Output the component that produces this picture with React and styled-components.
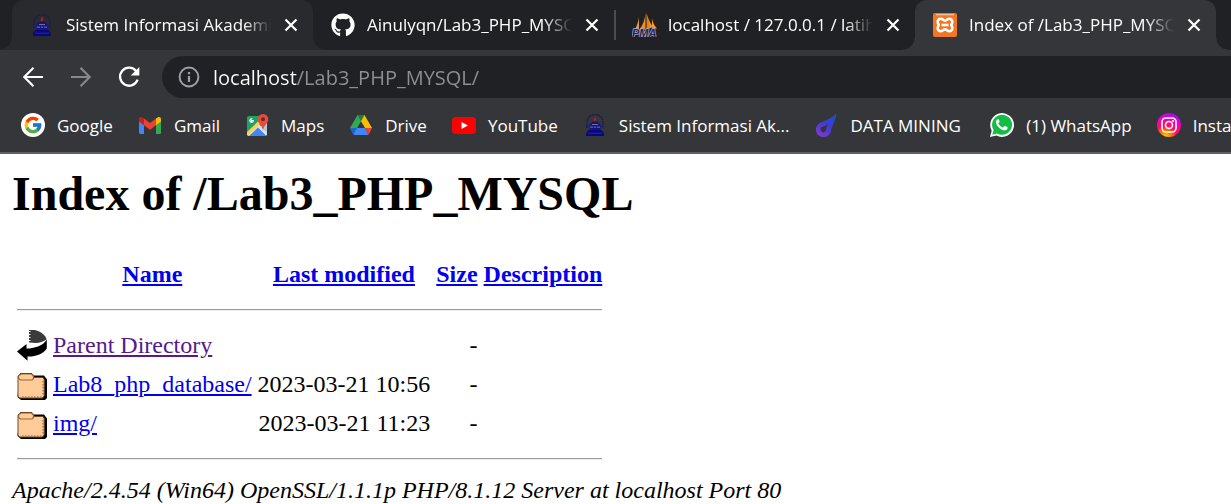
import React from "react";
import styled, { createGlobalStyle, css } from "styled-components";
import { FaGithub } from "react-icons/fa";
import { FcGoogle } from "react-icons/fc";

const GlobalStyle = createGlobalStyle`
  *, *::before, *::after { box-sizing: border-box; }
  body { margin: 0; background: #fff; }
`;

const uiFont = css`
  font-family: "Open Sans", "Noto Sans", sans-serif;
  font-weight: 400;
`;

const Chrome = styled.header`
  ${uiFont}
  font-size: 17px;
  background: #35363a;
  color: #fff;
  border-bottom: 2px solid #5f6063;
  overflow: hidden;
`;

const TabStrip = styled.div`
  display: flex;
  height: 50px;
  padding: 0 12px;
  background: #202124;
`;

const Tab = styled.div`
  position: relative;
  flex: 0 1 301px;
  min-width: 0;
  display: flex;
  align-items: center;
  gap: 8px;
  padding: 0 10px 0 18px;
  border-radius: 12px 12px 0 0;
  background: ${(p) => p.$bg || "transparent"};

  ${(p) =>
    p.$bg &&
    css`
      &::before,
      &::after {
        content: "";
        position: absolute;
        bottom: 0;
        width: 12px;
        height: 12px;
      }
      &::before {
        right: 100%;
        background: radial-gradient(circle at 0 0, transparent 11px, ${p.$bg} 12px);
      }
      &::after {
        left: 100%;
        background: radial-gradient(circle at 100% 0, transparent 11px, ${p.$bg} 12px);
      }
    `}

  ${(p) =>
    p.$divider &&
    css`
      &::after {
        content: "";
        position: absolute;
        right: -2px;
        top: 10px;
        width: 2px;
        height: 30px;
        background: #4a4c50;
      }
    `}
`;

const TabButton = styled.button`
  flex: 1;
  min-width: 0;
  display: flex;
  align-items: center;
  gap: 12px;
  padding: 0;
  border: 0;
  background: none;
  color: inherit;
  font: inherit;
  text-align: left;
`;

const TabTitle = styled.span`
  flex: 1;
  min-width: 0;
  overflow: hidden;
  white-space: nowrap;
  line-height: 24px;
  mask-image: linear-gradient(to right, #000 calc(100% - 28px), transparent);
`;

const IconButton = styled.button`
  flex: none;
  display: grid;
  place-items: center;
  width: 24px;
  height: 24px;
  padding: 0;
  border: 0;
  background: none;
  color: ${(p) => (p.$dim ? "#87888b" : "#fff")};
`;

const IconBox = styled.span`
  flex: none;
  display: grid;
  place-items: center;
  width: 24px;
  height: 24px;
  svg { display: block; }
`;

const Toolbar = styled.div`
  display: flex;
  align-items: center;
  gap: 24px;
  height: 54px;
  padding-left: 21px;
`;

const AddressBar = styled.label`
  flex: 1;
  display: flex;
  align-items: center;
  gap: 12px;
  height: 42px;
  margin-left: -3px;
  padding-left: 15px;
  border-radius: 21px 0 0 21px;
  background: #202124;
`;

const AddressInput = styled.input`
  ${uiFont}
  flex: 1;
  min-width: 0;
  height: 30px;
  padding: 0;
  border: 0;
  outline: 0;
  font-size: 20px;
  color: #fff;
  background: linear-gradient(to right, #fff 84px, #8d9095 84px);
  background-clip: text;
  -webkit-text-fill-color: transparent;
`;

const Bookmarks = styled.nav`
  display: flex;
  gap: 25px;
  height: 48px;
  padding: 0 0 6px 21px;
`;

const Bookmark = styled.a`
  flex: none;
  display: flex;
  align-items: center;
  gap: 12px;
  color: #fff;
  text-decoration: none;
  white-space: pre;
`;

const Page = styled.main`
  padding: 12px 12px 0;
  font-family: "Liberation Serif", "Times New Roman", serif;
  font-size: 24px;
  line-height: 27px;
  color: #000;
`;

const Heading = styled.h1`
  margin: 0 0 31px;
  font-size: 48px;
  line-height: 56px;
  font-weight: 700;
`;

const Listing = styled.table`
  border-spacing: 4px;
  border-collapse: separate;
  th, td { padding: 1px; white-space: nowrap; }
  th { text-align: center; height: 35px; }
`;

const RightCell = styled.td`
  text-align: right;
`;

const RuleCell = styled.td`
  hr {
    height: 2px;
    margin: 12px 0;
    border: 0;
    border-top: 1px solid #9a9a9a;
    border-bottom: 1px solid #eee;
  }
`;

const FileLink = styled.a`
  color: ${(p) => (p.$visited ? "#551a8b" : "#0000ee")};
`;

const FileIcon = styled.svg`
  display: block;
  width: 30px;
  height: 33px;
`;

const Signature = styled.address`
  font-style: italic;
`;

const Disc = styled.span`
  display: grid;
  place-items: center;
  width: 24px;
  height: 24px;
  border-radius: 50%;
  background: #fff;
`;

const Close = () => (
  <svg width="14" height="14" viewBox="0 0 14 14" stroke="currentColor" strokeWidth="2.2">
    <path d="M1.500 1.500 12.500 12.500M12.500 1.500 1.500 12.500" />
  </svg>
);

const Back = () => (
  <svg width="22" height="22" viewBox="0 0 22 22" fill="none" stroke="currentColor" strokeWidth="2.2">
    <path d="M21 11H3M11.5 1.8 2.3 11l9.2 9.2" />
  </svg>
);

const Forward = () => (
  <svg width="22" height="22" viewBox="0 0 22 22" fill="none" stroke="currentColor" strokeWidth="2.2">
    <path d="M1 11h18M10.5 1.8l9.2 9.2-9.2 9.2" />
  </svg>
);

const Reload = () => (
  <svg width="22" height="22" viewBox="0 0 22 22" fill="none">
    <path d="M18.200 5.200A9 9 0 1 0 19.600 13.600" stroke="currentColor" strokeWidth="2.3" />
    <path d="M21.300 1v8.600h-8.600z" fill="currentColor" />
  </svg>
);

const Info = () => (
  <svg width="22" height="22" viewBox="0 0 22 22" fill="none" stroke="#9aa0a6" strokeWidth="2">
    <circle cx="11" cy="11" r="9.4" />
    <path d="M11 10v6M11 6v2.200" strokeWidth="2.2" />
  </svg>
);

const Campus = () => (
  <svg width="20" height="22" viewBox="0 0 20 22">
    <path d="M2 14V8.500a8 8 0 0 1 16 0V14" fill="none" stroke="#1b1b52" strokeWidth="1.600" strokeDasharray="1.600 .8" />
    <path d="M10 6.500 4.500 10v6h11v-6z" fill="#14147a" />
    <path d="M2 12.500h16" stroke="#1d1d80" strokeWidth="2" />
    <path d="M7 10.500h6M5 13.200h3M9 13.200h2M12 13.200h3" stroke="#6d6da6" strokeWidth="1" />
    <path d="M10.500 2.500c-2.400 2-2 4-.9 5.500 1.900-1 1.900-3.500.9-5.500z" fill="#b31d22" />
    <path d="M1 19.500 3.500 16h13l2.500 3.500V22H1z" fill="#07077e" />
    <path d="M3 19.200h14" stroke="#2c2c86" />
  </svg>
);

const PhpMyAdmin = () => (
  <svg width="26" height="24" viewBox="0 0 26 24">
    <defs>
      <linearGradient id="sail" x1="0" x2="1">
        <stop offset="0" stopColor="#d5791b" />
        <stop offset="1" stopColor="#fba62b" />
      </linearGradient>
    </defs>
    <path d="M7 4v13H2.500C4.500 14 6.500 9 7 4z" fill="#e49a55" />
    <path d="M13.500 0v16.500H7.500C11 12 13 6 13.500 0z" fill="#f08a1d" />
    <path d="M14.500 0C16 6 19 11 21 14l-6.500 2.500z" fill="url(#sail)" />
    <path d="M20 5c.5 4 2 7 5 10.500h-5z" fill="#f79b24" />
    <text x="0" y="23.500" fontFamily="Liberation Sans, sans-serif" fontSize="11" fontStyle="italic" fontWeight="700" fill="#26264f" stroke="#a8a8cc" strokeWidth="1.400" paintOrder="stroke">PMA</text>
  </svg>
);

const Xampp = () => (
  <svg width="24" height="24" viewBox="0 0 24 24">
    <rect width="24" height="24" rx="2" fill="#f37623" />
    <path d="M3 1.700h18" stroke="#f9c09a" strokeWidth="1.200" />
    <path d="M7.700 5.800c2.300 0 2.300 1.800 4.300 1.800s2-1.800 4.300-1.800a3 3 0 0 1 3 3.200c0 1.600-1 2.300-1 3s1 1.500 1 3a3 3 0 0 1-3 3.200c-2.300 0-2.300-1.800-4.300-1.800s-2 1.800-4.300 1.800a3 3 0 0 1-3-3.200c0-1.500 1-2.300 1-3s-1-1.400-1-3a3 3 0 0 1 3-3.200z" fill="none" stroke="#fff" strokeWidth="2.600" />
    <path d="M8.500 12h7" stroke="#fff" strokeWidth="2.600" />
  </svg>
);

const Gmail = () => (
  <svg width="22" height="17" viewBox="0 0 22 17">
    <path d="M0 4 5 7.500V17H1.500A1.500 1.500 0 0 1 0 15.500z" fill="#4285f4" />
    <path d="M17 7.500 22 4v11.500a1.500 1.500 0 0 1-1.500 1.500H17z" fill="#34a853" />
    <path d="M17 1.500 19 .3C20.500-.5 22 .5 22 2.200V4.500L17 8.200z" fill="#fbbc04" />
    <path d="M5 8.200V1.500L11 6l6-4.500v6.700l-6 4.500z" fill="#ea4335" />
    <path d="M0 4.500V2.200C0 .5 1.500-.5 3 .3l2 1.200v6.700z" fill="#c5221f" />
  </svg>
);

const Maps = () => (
  <svg width="23" height="23" viewBox="0 0 23 23">
    <rect x="1" y="2" width="20" height="20" rx="2" fill="#1ea362" />
    <path d="M1 20 12 9.500 21 18v2a2 2 0 0 1-2 2H3a2 2 0 0 1-2-2z" fill="#dce4ec" />
    <path d="M3 22 12 13.500 20.500 22z" fill="#4285f4" />
    <path d="m1 18 11-10.500 2.200 2.200L2 21.500 1 20z" fill="#ffd04b" />
    <path d="M21 8.500v10l-6.500-6z" fill="#bac8d5" />
    <path d="M7.800 6.500H5.500v1.300h1.200A1.700 1.700 0 1 1 6.300 5" fill="none" stroke="#fff" strokeWidth="1.200" />
    <path d="M17 0a5.300 5.300 0 0 0-5.300 5.300c0 4 4.300 5.500 5.300 11.200 1-5.700 5.300-7.200 5.300-11.200A5.300 5.300 0 0 0 17 0z" fill="#e84c3d" />
    <circle cx="17" cy="5.300" r="2" fill="#7d231c" />
  </svg>
);

const Drive = () => (
  <svg width="22" height="20" viewBox="0 0 22 20">
    <path d="M7.500 0h7L11 6.300 3.700 19 0 13z" fill="#34a853" />
    <path d="M7.500 0h7L11 6.300z" fill="#188038" />
    <path d="M14.500 0 22 13h-7L11 6.300z" fill="#fbbc04" />
    <path d="M0 13h7l-3.500 6.500C2.500 19 2 16.500 0 13z" fill="#1967d2" />
    <path d="M7 13h8l3.500 6.500c-.5.400-1 .500-1.500.500H5c-.500 0-1-.1-1.500-.500z" fill="#4285f4" />
    <path d="M15 13h7l-2.500 5c-.300.700-.500 1.200-1 1.500z" fill="#ea4335" />
  </svg>
);

const YouTube = () => (
  <svg width="24" height="17" viewBox="0 0 24 17">
    <rect width="24" height="17" rx="4" fill="#f00" />
    <path d="m9.500 5 6.500 3.500L9.500 12z" fill="#fff" />
  </svg>
);

const Drop = () => (
  <svg width="22" height="24" viewBox="0 0 22 24">
    <defs>
      <linearGradient id="drop" x1="0.900" y1="0" x2="0.200" y2="1">
        <stop offset="0" stopColor="#1457c8" />
        <stop offset=".45" stopColor="#3e3bd0" />
        <stop offset="1" stopColor="#7c3bd0" />
      </linearGradient>
    </defs>
    <path fillRule="evenodd" fill="url(#drop)" d="M21.500.5C16 6 9 7.500 4 10.500a7.600 7.600 0 1 0 12 7.500C17.500 11 21 7 21.500.5zM8.200 19.400a3 3 0 0 1-1.500-5.400c2-.3 4.500-1.500 6.300-3.200-1.300 2.500-1.400 4.200-2 6.200a3 3 0 0 1-2.800 2.400z" />
  </svg>
);

const WhatsApp = () => (
  <svg width="24" height="24" viewBox="0 0 24 24">
    <path d="M0 24l1.700-6.200A11.900 11.900 0 1 1 6.300 22.400z" fill="#fff" />
    <path d="M2.300 21.700l1.300-4.600A10 10 0 1 1 7 20.400z" fill="#13bd45" />
    <path d="M8.900 6.600c-.3-.7-1.700-.6-2.300.4-2.100 3.200 1.600 7.200 4.200 9 2.700 1.800 5.700 1.900 6.600-.2.400-1 .3-1.500-.1-1.700l-2.300-1.100c-1-.4-1.300 1.700-2.200 1.400-1.800-.6-3.600-2.200-4.400-4-.3-.8 1.400-1.300 1.200-2z" fill="#fff" />
  </svg>
);

const Instagram = () => (
  <svg width="24" height="24" viewBox="0 0 24 24">
    <defs>
      <radialGradient id="insta" cx="0.350" cy="1" r="1.050">
        <stop offset="0" stopColor="#ffd400" />
        <stop offset=".25" stopColor="#ff7a00" />
        <stop offset=".45" stopColor="#ff0f60" />
        <stop offset=".75" stopColor="#ee00c0" />
        <stop offset="1" stopColor="#8a12ff" />
      </radialGradient>
    </defs>
    <circle cx="12" cy="12" r="12" fill="url(#insta)" />
    <g fill="none" stroke="#fff" strokeWidth="1.600">
      <rect x="5" y="5" width="14" height="14" rx="4" />
      <circle cx="12" cy="12" r="3.500" />
    </g>
    <circle cx="16" cy="8" r="1" fill="#fff" />
  </svg>
);

const Google = () => (
  <Disc>
    <FcGoogle size={20} />
  </Disc>
);

const BackArrow = () => (
  <FileIcon viewBox="0 0 30 33" aria-hidden="true">
    <path d="M12 1h6c6 1.500 10.500 5 11.500 9.500-3.500 2.500-7 3.300-10.500 3.500l-7-.5z" fill="#3a3a3a" />
    <path d="M12 2.500h1.500M12 5.500h1.500M12 8.500h1.500M12 11.500h1.500" stroke="#fff" strokeWidth="1.200" />
    <path d="M29.800 10.500v9c-3.500 5.500-10.500 8.200-19.300 8v4.200L0 22.500 9.500 15v4.500C17 19.500 26 17 29.800 10.500z" fill="#000" />
  </FileIcon>
);

const Folder = () => (
  <FileIcon viewBox="0 0 30 33" aria-hidden="true">
    <path d="M3 5.500 4 5h10.500l2.500 2.500h10l3 4V30l-2 2H4l-3.500-3z" fill="#000" />
    <path d="M1 11.500V8l2.500-2H14l2.500 2v1.500H26l1.200 2v16L25.500 30H3l-2-1.500z" fill="#ffcc99" stroke="#6a4a2e" strokeWidth="1" />
    <path d="M1.500 10.500 3.500 12H15l1.500-1.500V8L14.500 6H4L1.500 8z" fill="#ffcc99" stroke="#996633" strokeWidth="1.200" />
    <path d="M26 13v15M5 29h20" stroke="#b37a45" strokeWidth="1.500" strokeDasharray="1.500 1.500" />
  </FileIcon>
);

const GitHub = () => <FaGithub size={24} />;

const tabs = [
  { title: "Sistem Informasi Akademik", icon: Campus, bg: "#292a2d" },
  { title: "Ainulyqn/Lab3_PHP_MYSQL", icon: GitHub, divider: true },
  { title: "localhost / 127.0.0.1 / latihan1", icon: PhpMyAdmin },
  { title: "Index of /Lab3_PHP_MYSQL", icon: Xampp, bg: "#35363a", active: true },
];

const bookmarks = [
  ["Google", Google],
  ["Gmail", Gmail],
  ["Maps", Maps],
  ["Drive", Drive],
  ["YouTube", YouTube],
  ["Sistem Informasi Ak...", Campus],
  ["DATA MINING ", Drop],
  ["(1) WhatsApp", WhatsApp],
  ["Instagram", Instagram],
];

const files = [
  { name: "Parent Directory", date: "", icon: BackArrow, visited: true },
  { name: "Lab8_php_database/", date: "2023-03-21 10:56", icon: Folder },
  { name: "img/", date: "2023-03-21 11:23", icon: Folder },
];

const Rule = () => (
  <tr>
    <RuleCell colSpan={5}>
      <hr />
    </RuleCell>
  </tr>
);

export default function App() {
  return (
    <>
      <GlobalStyle />
      <Chrome>
        <TabStrip role="tablist">
          {tabs.map(({ title, icon: Icon, bg, divider, active }) => (
            <Tab key={title} $bg={bg} $divider={divider}>
              <TabButton role="tab" aria-selected={!!active}>
                <IconBox><Icon /></IconBox>
                <TabTitle>{title}</TabTitle>
              </TabButton>
              <IconButton aria-label="Close tab"><Close /></IconButton>
            </Tab>
          ))}
        </TabStrip>
        <Toolbar>
          <IconButton aria-label="Back"><Back /></IconButton>
          <IconButton aria-label="Forward" $dim><Forward /></IconButton>
          <IconButton aria-label="Reload"><Reload /></IconButton>
          <AddressBar>
            <IconBox><Info /></IconBox>
            <AddressInput aria-label="Address" defaultValue="localhost/Lab3_PHP_MYSQL/" />
          </AddressBar>
        </Toolbar>
        <Bookmarks aria-label="Bookmarks">
          {bookmarks.map(([label, Icon]) => (
            <Bookmark key={label} href="#">
              <IconBox><Icon /></IconBox>
              <span>{label}</span>
            </Bookmark>
          ))}
        </Bookmarks>
      </Chrome>
      <Page>
        <Heading>Index of /Lab3_PHP_MYSQL</Heading>
        <Listing>
          <tbody>
            <tr>
              <th aria-label="Type" />
              <th scope="col"><FileLink href="#">Name</FileLink></th>
              <th scope="col"><FileLink href="#">Last modified</FileLink></th>
              <th scope="col"><FileLink href="#">Size</FileLink></th>
              <th scope="col"><FileLink href="#">Description</FileLink></th>
            </tr>
            <Rule />
            {files.map(({ name, date, icon: Icon, visited }) => (
              <tr key={name}>
                <td><Icon /></td>
                <td><FileLink href="#" $visited={visited}>{name}</FileLink></td>
                <RightCell>{date}</RightCell>
                <RightCell>-</RightCell>
                <td />
              </tr>
            ))}
            <Rule />
          </tbody>
        </Listing>
        <Signature>Apache/2.4.54 (Win64) OpenSSL/1.1.1p PHP/8.1.12 Server at localhost Port 80</Signature>
      </Page>
    </>
  );
}
